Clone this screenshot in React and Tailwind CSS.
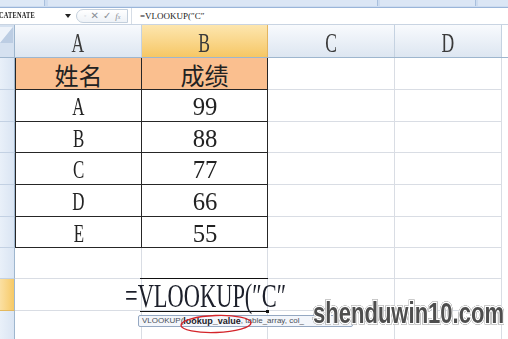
import React from 'react';

const ROW_H = ['h-[32px]', 'h-[32px]', 'h-[31px]', 'h-[32px]', 'h-[32px]', 'h-[31px]', 'h-[31px]', 'h-[32px]', 'h-[32px]'];

const data = [
  ['姓名', '成绩'],
  ['A', '99'],
  ['B', '88'],
  ['C', '77'],
  ['D', '66'],
  ['E', '55'],
];

function Letter({ children }) {
  // narrow serif glyphs, like the squeezed screenshot
  return (
    <span className="inline-block scale-x-[0.65] text-[26px] leading-none font-['Liberation_Serif',serif]">{children}</span>
  );
}

function Digits({ children }) {
  return (
    <span className="inline-block scale-x-[0.95] text-[26px] leading-none font-['Liberation_Serif',serif]">{children}</span>
  );
}

function Han({ children }) {
  return (
    <span className="inline-block text-[24px] leading-none font-['Noto_Sans_CJK_SC',sans-serif]">{children}</span>
  );
}

function RowHead({ h, active }) {
  return (
    <div
      className={
        active
          ? `${h} w-[15px] shrink-0 border-r border-b border-r-[#9eb6ce] border-b-[#e3b85e] bg-gradient-to-r from-[#fbe0a2] to-[#f6c965]`
          : `${h} w-[15px] shrink-0 border-r border-b border-r-[#9eb6ce] border-b-[#c3d1e3] bg-gradient-to-r from-[#e9f0f9] to-[#dae5f3]`
      }
    />
  );
}

function TableRow({ h, a, b, head }) {
  const fill = head ? 'bg-[#fabf8f]' : 'bg-white';
  const content = (v) => (head ? <Han>{v}</Han> : /\d/.test(v) ? <Digits>{v}</Digits> : <Letter>{v}</Letter>);
  return (
    <div className={`${h} flex`}>
      <RowHead h={h} />
      <div className={`w-[127px] shrink-0 flex items-center justify-center pt-[3px] border-l border-r border-b border-[#262626] ${fill}`}>
        {content(a)}
      </div>
      <div className={`w-[126px] shrink-0 flex items-center justify-center pt-[3px] border-r border-b border-[#262626] ${fill}`}>
        {content(b)}
      </div>
      <div className="w-[127px] shrink-0 border-r border-b border-[#d9dde4]" />
      <div className="w-[107px] shrink-0 border-r border-b border-[#d9dde4]" />
    </div>
  );
}

function EmptyRow({ h, active }) {
  return (
    <div className={`${h} flex`}>
      <RowHead h={h} active={active} />
      <div className="w-[127px] shrink-0 border-r border-b border-[#d9dde4]" />
      <div className="w-[126px] shrink-0 border-r border-b border-[#d9dde4]" />
      <div className="w-[127px] shrink-0 border-r border-b border-[#d9dde4]" />
      <div className="w-[107px] shrink-0 border-r border-b border-[#d9dde4]" />
    </div>
  );
}

export default function App() {
  return (
    <div className="relative w-[508px] h-[339px] overflow-hidden bg-white text-[#222] font-['Liberation_Serif',serif]">
      {/* ribbon remnant */}
      <div className="h-[8px] flex bg-[#cddcf0] border-b border-[#9ab5d9]">
        <div className="w-[45px] h-[6px] bg-[#dde8f6] border-r border-[#a8bfdd]" />
        <div className="w-[330px] h-[6px] ml-[3px] bg-[#dbe6f5] border-r border-[#a8bfdd]" />
        <div className="w-[96px] h-[6px] ml-[2px] bg-[#dbe6f5] border-r border-[#a8bfdd]" />
        <div className="flex-1 h-[6px] ml-[2px] bg-[#dbe6f5]" />
      </div>

      {/* formula bar */}
      <div className="h-[17px] flex items-center bg-white border-b border-[#c9d4e2]">
        <div className="w-[66px] shrink-0 flex items-center -ml-[1px]">
          <span className="text-[8px] font-bold leading-none inline-block scale-x-[0.8] origin-left tracking-[0.2px]">CATENATE</span>
        </div>
        <svg width="6" height="4" viewBox="0 0 6 4" className="shrink-0">
          <path d="M0 0H6L3 4Z" fill="#222" />
        </svg>
        <div className="ml-[5px] w-[52px] h-[14px] shrink-0 flex items-center gap-[4px] pl-[7px] rounded-l-full border border-[#c3cfdc] bg-gradient-to-b from-[#ffffff] to-[#eef2f7] text-[#8b8f96]">
          <span className="text-[7px] leading-none text-[#c6ccd4]">◦</span>
          <span className="text-[10px] leading-none font-['DejaVu_Sans',sans-serif]">✕</span>
          <span className="text-[10px] leading-none font-['DejaVu_Sans',sans-serif]">✓</span>
          <span className="text-[9px] leading-none italic">f<span className="text-[6px]">x</span></span>
        </div>
        <div className="h-full w-px bg-[#d6dde6] ml-[3px]" />
        <span className="ml-[8px] text-[9px] leading-none">=VLOOKUP(″C″</span>
      </div>

      {/* column headers */}
      <div className="h-[33px] flex border-b border-[#9eb6ce]">
        <div className="w-[15px] shrink-0 relative border-r border-[#9eb6ce] bg-[#d5e1f0]">
          <svg width="14" height="32" viewBox="0 0 14 32" className="absolute left-0 top-0">
            <path d="M0 2H13L0 18Z" fill="#eef3fa" />
            <path d="M13 2V18H0Z" fill="#bccde3" />
          </svg>
        </div>
        {[
          ['A', 'w-[127px]'],
          ['B', 'w-[126px]'],
          ['C', 'w-[127px]'],
          ['D', 'w-[107px]'],
        ].map(([l, w]) => (
          <div
            key={l}
            className={
              l === 'B'
                ? `${w} shrink-0 flex items-center justify-center pt-[5px] border-r border-[#e3b560] bg-gradient-to-b from-[#fde6ae] to-[#f6c764] text-[#3a3a3a]`
                : `${w} shrink-0 flex items-center justify-center pt-[5px] border-r border-[#c5d2e1] bg-gradient-to-b from-[#f8fafd] to-[#dde6f1] text-[#3a3a3a]`
            }
          >
            <span className="inline-block scale-x-[0.65] text-[27px] leading-none">{l}</span>
          </div>
        ))}
      </div>

      {/* rows */}
      {data.map(([a, b], i) => (
        <TableRow key={i} h={ROW_H[i]} a={a} b={b} head={i === 0} />
      ))}
      <EmptyRow h={ROW_H[6]} />
      <EmptyRow h={ROW_H[7]} active />
      <EmptyRow h={ROW_H[8]} />

      {/* in-cell editing overlay */}
      <div className="absolute left-[140px] top-[278px] w-[128px] h-[34px] border-t border-b border-[#111]" />
      <div className="absolute left-[266px] top-[310px] w-[3px] h-[3px] bg-[#111]" />
      <div className="absolute left-[125px] top-[280px] h-[32px] flex items-center">
        <span className="inline-block origin-left scale-x-[0.66] text-[34px] leading-none text-[#1c1f2a] whitespace-nowrap">
          =VLOOKUP(″C″
        </span>
      </div>

      {/* function tooltip */}
      <div className="absolute left-[138px] top-[315px] h-[12px] w-[215px] flex items-center px-[3px] rounded-[2px] border border-[#95a8c2] bg-[#f3f6fb] text-[8px] leading-none text-[#4a4f58] whitespace-nowrap overflow-hidden font-['Liberation_Sans',sans-serif]">
        VLOOKUP(<span className="font-bold text-[9px] text-[#1e2128]">lookup_value</span>, table_array, col_
      </div>
      <svg width="76" height="22" viewBox="0 0 76 22" className="absolute left-[178px] top-[313px]">
        <ellipse cx="38" cy="11" rx="35" ry="8.5" transform="rotate(-2 38 11)" fill="none" stroke="#d4242a" strokeWidth="1.4" />
      </svg>

      {/* watermark */}
      <div className="absolute left-[313px] top-[296px] h-[34px] flex items-center">
        <span className="inline-block origin-left scale-x-[0.76] text-[29px] font-bold leading-none text-[#4e4e4e] whitespace-nowrap font-['Liberation_Sans',sans-serif] [-webkit-text-stroke:3px_#fff] [paint-order:stroke_fill] [filter:drop-shadow(0_0_0.6px_#777)_drop-shadow(0_0_0.6px_#888)]">
          shenduwin10.com
        </span>
      </div>
    </div>
  );
}
